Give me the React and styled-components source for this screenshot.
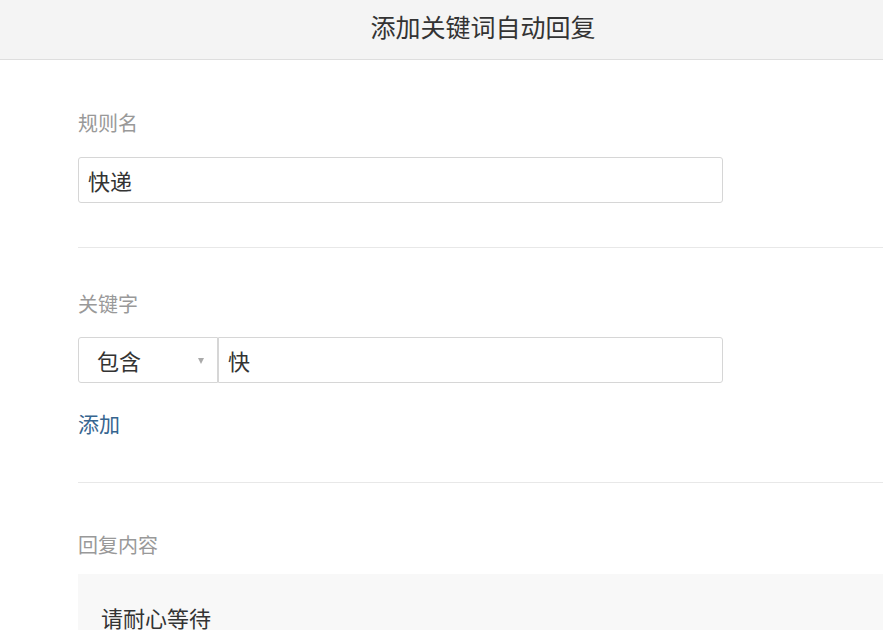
import React from "react";
import styled, { createGlobalStyle } from "styled-components";

const GlobalStyle = createGlobalStyle`
  html, body {
    margin: 0;
    padding: 0;
    background: #fff;
    font-family: "Noto Sans CJK SC", "Noto Sans", sans-serif;
  }
`;

export default function App() {
  return (
    <>
      <GlobalStyle />
      <Page>
        <Header>
          <Title>添加关键词自动回复</Title>
        </Header>

        <Section $top={52} $bottom={44}>
          <Label>规则名</Label>
          <TextInput $width={645} defaultValue="快递" readOnly />
        </Section>

        <Section $top={45} $bottom={47}>
          <Label $gap={22}>关键字</Label>
          <KeywordRow>
            <Select>
              <span>包含</span>
              <Caret />
            </Select>
            <TextInput $width={505} defaultValue="快" readOnly />
          </KeywordRow>
          <AddLink>添加</AddLink>
        </Section>

        <Section $top={51} $bottom={0} $last>
          <Label $gap={18}>回复内容</Label>
          <ReplyBox>请耐心等待</ReplyBox>
        </Section>
      </Page>
    </>
  );
}

const Page = styled.div`
  width: 100%;
  height: 630px;
  overflow: hidden;
`;

const Header = styled.header`
  height: 45px;
  padding: 14px 0 0 83px;
  background: #f4f4f4;
  border-bottom: 1px solid #dedede;
  display: flex;
  justify-content: center;
`;

const Title = styled.h1`
  margin: 0;
  font-size: 25px;
  line-height: 25px;
  font-weight: normal;
  color: #333;
`;

const Section = styled.section`
  margin-left: 78px;
  padding: ${(p) => p.$top}px 0 ${(p) => p.$bottom}px;
  border-bottom: ${(p) => (p.$last ? "none" : "1px solid #e8e8e8")};
`;

const Label = styled.div`
  font-size: 20px;
  line-height: 22px;
  color: #999;
  margin-bottom: ${(p) => p.$gap ?? 23}px;
`;

const TextInput = styled.input`
  box-sizing: border-box;
  display: block;
  width: ${(p) => p.$width}px;
  height: 46px;
  margin: 0;
  padding: 0 9px;
  border: 1px solid #d6d6d6;
  border-radius: 3px;
  background: #fff;
  font-family: inherit;
  font-size: 22px;
  color: #333;
  outline: none;
`;

const KeywordRow = styled.div`
  display: flex;
  align-items: stretch;
  ${TextInput} {
    border-radius: 0 3px 3px 0;
  }
`;

const Select = styled.div`
  box-sizing: border-box;
  width: 140px;
  height: 46px;
  padding: 0 13px 0 18px;
  border: 1px solid #d6d6d6;
  border-radius: 3px 0 0 3px;
  display: flex;
  align-items: center;
  justify-content: space-between;
  font-size: 22px;
  color: #333;
`;

const Caret = styled.span`
  width: 0;
  height: 0;
  margin-top: 2px;
  border-left: 3.5px solid transparent;
  border-right: 3.5px solid transparent;
  border-top: 6px solid #aaa;
`;

const AddLink = styled.a`
  display: block;
  margin-top: 29px;
  font-size: 21px;
  line-height: 23px;
  color: #36658f;
  cursor: pointer;
`;

const ReplyBox = styled.div`
  background: #f8f8f8;
  padding: 31px 0 20px 23px;
  font-size: 22px;
  line-height: 24px;
  color: #333;
`;
